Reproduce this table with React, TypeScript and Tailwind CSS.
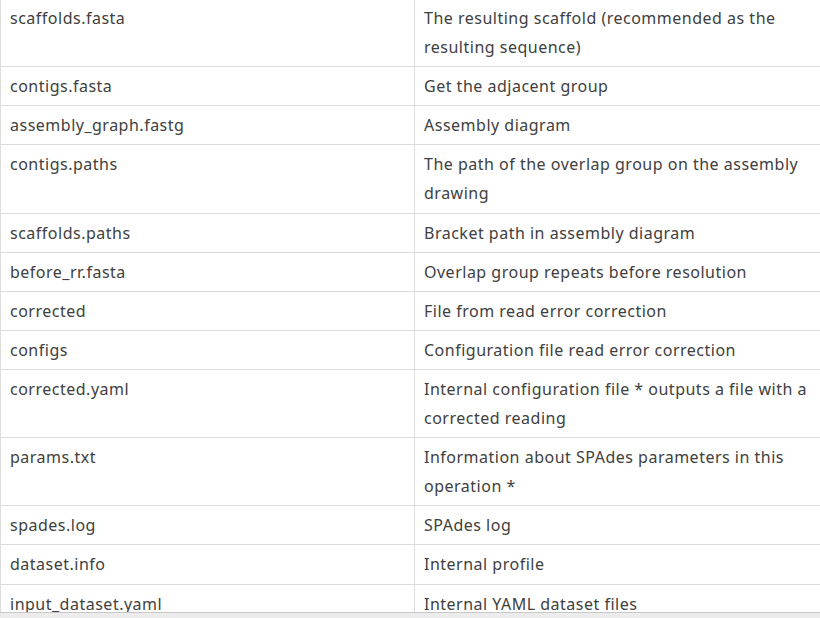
const rows: [string, string][] = [
  ["scaffolds.fasta", "The resulting scaffold (recommended as the resulting sequence)"],
  ["contigs.fasta", "Get the adjacent group"],
  ["assembly_graph.fastg", "Assembly diagram"],
  ["contigs.paths", "The path of the overlap group on the assembly drawing"],
  ["scaffolds.paths", "Bracket path in assembly diagram"],
  ["before_rr.fasta", "Overlap group repeats before resolution"],
  ["corrected", "File from read error correction"],
  ["configs", "Configuration file read error correction"],
  ["corrected.yaml", "Internal configuration file * outputs a file with a corrected reading"],
  ["params.txt", "Information about SPAdes parameters in this operation *"],
  ["spades.log", "SPAdes log"],
  ["dataset.info", "Internal profile"],
  ["input_dataset.yaml", "Internal YAML dataset files"],
];

export default function App() {
  return (
    <div className="flex h-[618px] w-[820px] flex-col overflow-hidden bg-white font-['Noto_Sans',sans-serif] text-[16px] leading-[29px] tracking-[0.5px] text-[#404040]">
      <div className="flex-1 overflow-hidden">
        <div className="-mt-[2px] w-[828px]">
          {rows.map(([name, desc]) => (
            <div key={name} className="grid grid-cols-[414px_414px] border-t border-[#dcdcdc]">
              <div className="border-l border-[#dcdcdc] px-[9px] pt-[5px] pb-[4.14px]">{name}</div>
              <div className="border-l border-[#dcdcdc] px-[9px] pt-[5px] pb-[4.14px]">{desc}</div>
            </div>
          ))}
        </div>
      </div>
      <div className="h-[6px] border-t border-[#c8c8c8] bg-[#ececec]" />
    </div>
  );
}
